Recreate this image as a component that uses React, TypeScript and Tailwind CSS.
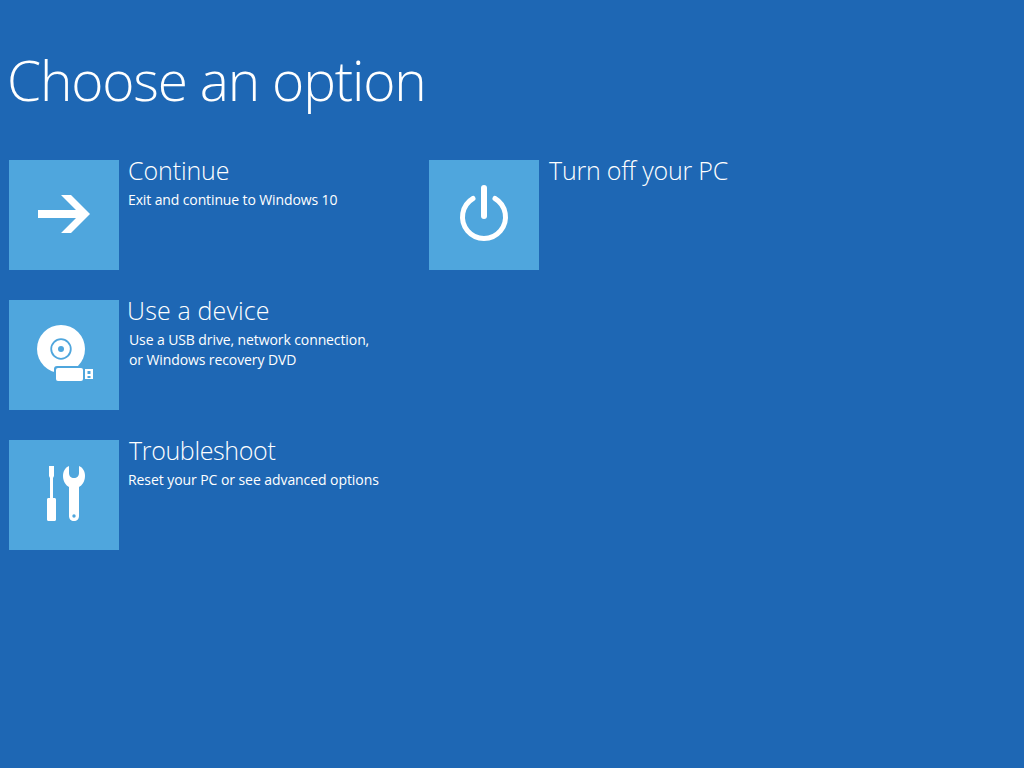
const F = "font-['Open_Sans','Noto_Sans',sans-serif]";
const TILE = "#4fa6dd";

function Arrow() {
  return (
    <svg width="110" height="110" viewBox="0 0 110 110" fill="#fff">
      <path d="M52 35H62L81 54L62 73H52L67 58H29V50H67Z" />
    </svg>
  );
}

function Power() {
  return (
    <svg width="110" height="110" viewBox="0 0 110 110" fill="none" stroke="#fff">
      <path d="M44 38.5A21.5 21.5 0 1 0 66 38.5" strokeWidth="5" strokeLinecap="round" />
      <path d="M55 28V56" strokeWidth="6" strokeLinecap="round" />
    </svg>
  );
}

function Device() {
  return (
    <svg width="110" height="110" viewBox="0 0 110 110">
      <circle cx="52" cy="49" r="24" fill="#fff" />
      <circle cx="52" cy="49" r="9.8" fill="none" stroke={TILE} strokeWidth="1.8" />
      <circle cx="52" cy="49" r="3" fill={TILE} />
      <rect x="45" y="66" width="31" height="17" rx="3" fill={TILE} />
      <rect x="47" y="68" width="27" height="13" rx="2" fill="#fff" />
      <path fillRule="evenodd" fill="#fff" d="M76 69H84V79H76ZM78.5 71V74H81.5V71ZM78.5 76V78H81.5V76Z" />
    </svg>
  );
}

function Tools() {
  return (
    <svg width="110" height="110" viewBox="0 0 110 110" fill="#fff">
      <path d="M40 26H45V36L44 38V58H45.5C46.4 58 47 58.6 47 59.5V79.5C47 80.4 46.4 81 45.5 81H39.5C38.6 81 38 80.4 38 79.5V59.5C38 58.6 38.6 58 39.5 58H41V38L40 36Z" />
      <path fillRule="evenodd" d="M60 26V33C60 36 62 38 65 38C68 38 70 36 70 33V26C74 27.5 76 31.5 76 36C76 41.5 73 45.5 70 47V76C70 79 68 81 65 81C62 81 60 79 60 76V47C57 45.5 54 41.5 54 36C54 31.5 56 27.5 60 26ZM65 74.3A1.7 1.7 0 1 0 65 77.7A1.7 1.7 0 1 0 65 74.3Z" />
    </svg>
  );
}

function Tile({ icon, title, desc, titleClass = "", descClass = "" }: { icon: React.ReactNode; title: string; desc?: string[]; titleClass?: string; descClass?: string }) {
  return (
    <div className="flex w-[420px]">
      <div className="w-[110px] h-[110px] bg-[#4fa6dd] shrink-0">{icon}</div>
      <div className={`pl-[9px] text-white ${F}`}>
        <div className={`text-[25px] leading-[24px] mt-[-2px] font-light ${titleClass}`}>{title}</div>
        {desc && (
          <div className={`text-[14px] leading-[20px] mt-[8px] ${descClass}`}>
            {desc.map((d) => (
              <div key={d}>{d}</div>
            ))}
          </div>
        )}
      </div>
    </div>
  );
}

export default function App() {
  return (
    <div className="w-[1024px] h-[768px] bg-[#1e67b4] overflow-hidden pl-[9px]">
      <h1 className={`${F} text-white font-light text-[55px] leading-[70px] tracking-[-1.2px] ml-[-2px] pt-[45px]`}>Choose an option</h1>
      <div className="flex mt-[45px]">
        <div className="flex flex-col gap-[30px]">
          <Tile icon={<Arrow />} title="Continue" titleClass="tracking-[-0.1px]" descClass="tracking-[-0.12px]" desc={["Exit and continue to Windows 10"]} />
          <Tile icon={<Device />} title="Use a device" titleClass="ml-[-1px] tracking-[0.15px]" descClass="ml-[1px] tracking-[-0.1px]" desc={["Use a USB drive, network connection,", "or Windows recovery DVD"]} />
          <Tile icon={<Tools />} title="Troubleshoot" titleClass="ml-[1px] tracking-[-0.35px]" descClass="tracking-[-0.07px]" desc={["Reset your PC or see advanced options"]} />
        </div>
        <div>
          <Tile icon={<Power />} title="Turn off your PC" titleClass="ml-[1px] tracking-[-0.2px]" />
        </div>
      </div>
    </div>
  );
}
